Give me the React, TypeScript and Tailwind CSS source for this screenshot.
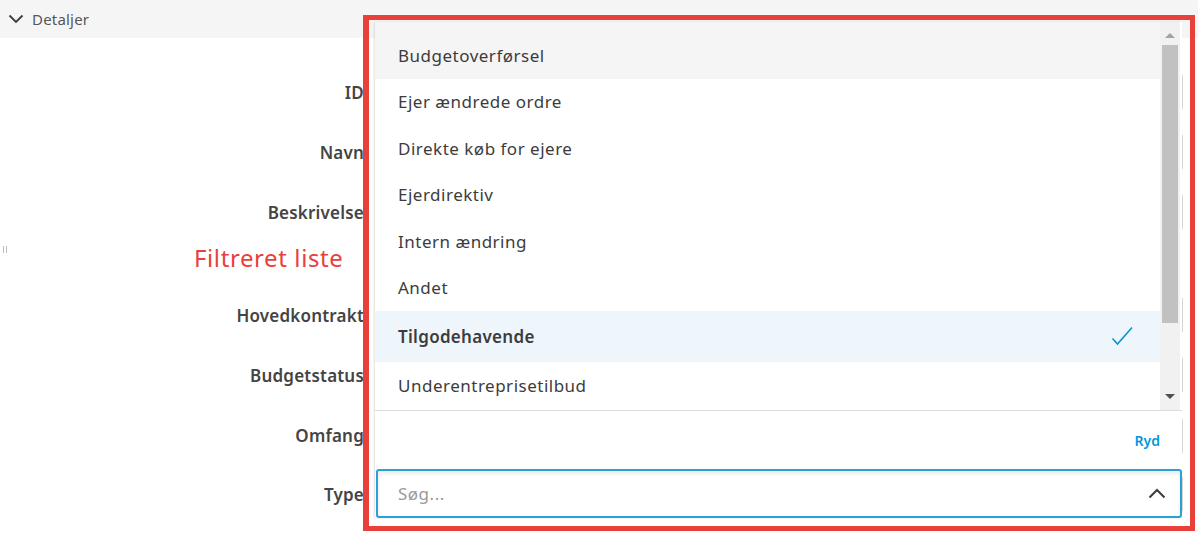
import React from "react";

const items = [
  { label: "Ejer ændrede ordre", h: "h-[46.4px]" },
  { label: "Direkte køb for ejere", h: "h-[46.4px]" },
  { label: "Ejerdirektiv", h: "h-[46.4px]" },
  { label: "Intern ændring", h: "h-[46.4px]" },
  { label: "Andet", h: "h-[46.4px]" },
];

const rows = [
  { label: "ID", h: "h-[60px]" },
  { label: "Navn", h: "h-[60px]" },
  { label: "Beskrivelse", h: "h-[60px]" },
  { label: "", h: "h-[43px]" },
  { label: "Hovedkontrakt", h: "h-[60px]" },
  { label: "Budgetstatus", h: "h-[60px]" },
  { label: "Omfang", h: "h-[61px]" },
  { label: "Type", h: "h-[56px]" },
];

export default function App() {
  return (
    <div className="relative w-[1198px] h-[534px] overflow-hidden bg-white font-['Noto_Sans',sans-serif] text-[#3c3c3c]">
      {/* header */}
      <div className="h-[38px] bg-[#f5f5f5] flex items-center pl-[8px] gap-[8px]">
        <svg width="16" height="10" viewBox="0 0 16 10" fill="none">
          <polyline points="1.5,1.5 8,8 14.5,1.5" stroke="#3c3c3c" strokeWidth="1.8" fill="none" />
        </svg>
        <span className="text-[15px] tracking-[0.2px] text-[#555] leading-none">Detaljer</span>
      </div>

      {/* form */}
      <div className="flex flex-col pt-[24px]">
        {rows.map((r, i) => (
          <div key={i} className={`${r.h} flex items-center`}>
            <div className="w-[365px] text-right text-[17px] font-semibold tracking-[0.2px] text-[#444] leading-none pr-[1px]">{r.label}</div>
            {r.label && (
              <div className="ml-[10px] w-[808px] h-[36px] border border-[#d6d6d6] rounded-[2px]" />
            )}
          </div>
        ))}
      </div>

      {/* resize handle */}
      <div className="absolute left-[3px] top-[246px] flex gap-[2px]">
        <div className="w-px h-[7px] bg-[#bbb]" />
        <div className="w-px h-[7px] bg-[#bbb]" />
      </div>

      {/* annotation label */}
      <div className="absolute left-[194px] top-[242px] text-[24px] tracking-[0.6px] leading-[32px] text-[#e8413a]">Filtreret liste</div>

      {/* dropdown */}
      <div className="absolute left-[375px] top-[22px] w-[807px] h-[496px] bg-white shadow-[-1px_0_2px_rgba(0,0,0,0.12)] flex flex-col">
        <div className="h-[389px] flex border-b border-[#dcdcdc]">
          <div className="flex-1 flex flex-col text-[17px] tracking-[0.5px]">
            <div className="h-[57px] bg-[#f5f5f5] flex items-center pl-[23px] pt-[10px]">Budgetoverførsel</div>
            {items.map((it) => (
              <div key={it.label} className={`${it.h} flex items-center pl-[23px]`}>{it.label}</div>
            ))}
            <div className="h-[51px] bg-[#eef6fc] flex items-center justify-between pl-[23px] pr-[27px] font-semibold tracking-[0.3px]">
              <span>Tilgodehavende</span>
              <svg width="22" height="20" viewBox="0 0 22 20" fill="none">
                <polyline points="1.5,12.5 6.5,18 21,1.5" stroke="#0696d7" strokeWidth="1.6" fill="none" />
              </svg>
            </div>
            <div className="h-[47px] flex items-center pl-[23px]">Underentreprisetilbud</div>
          </div>
          <div className="w-[20px] mr-[2px] bg-[#f1f1f1] flex flex-col items-center">
            <div className="h-[23px] flex items-center justify-center pt-[3px]">
              <div className="w-0 h-0 border-l-[5px] border-r-[5px] border-b-[5px] border-l-transparent border-r-transparent border-b-[#a3a3a3]" />
            </div>
            <div className="w-[16px] h-[278px] bg-[#c1c1c1]" />
            <div className="flex-1" />
            <div className="h-[24px] flex items-center justify-center pb-[4px]">
              <div className="w-0 h-0 border-l-[5px] border-r-[5px] border-t-[5px] border-l-transparent border-r-transparent border-t-[#505050]" />
            </div>
          </div>
        </div>
        <div className="h-[58px] flex items-center justify-end pr-[22px]">
          <span className="text-[14px] font-semibold text-[#0696d7]">Ryd</span>
        </div>
        <div className="h-[49px] ml-[1px] border-2 border-[#2a9fd8] rounded-[3px] bg-white shadow-[inset_0_3px_4px_rgba(0,0,0,0.08)] flex items-center justify-between pl-[20px] pr-[14px]">
          <span className="text-[17px] tracking-[0.5px] text-[#9a9a9a]">Søg...</span>
          <svg width="18" height="11" viewBox="0 0 18 11" fill="none">
            <polyline points="1.5,9.5 9,2 16.5,9.5" stroke="#3c3c3c" strokeWidth="2" fill="none" />
          </svg>
        </div>
      </div>

      {/* red annotation box */}
      <div className="absolute left-[363px] top-[15px] w-[832px] h-[516px] border-[6px] border-[#e8413a] border-t-[5px] border-r-[5px] border-b-[5px]" />
    </div>
  );
}
